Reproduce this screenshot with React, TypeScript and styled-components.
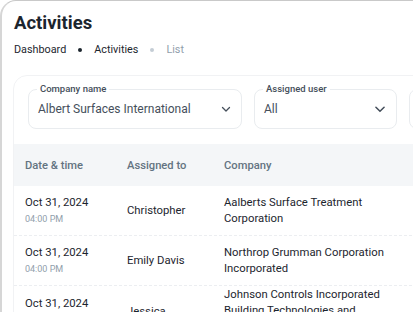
import React from "react";
import styled, { createGlobalStyle } from "styled-components";

const Global = createGlobalStyle`
  html, body { margin: 0; padding: 0; background: #fff; overflow: hidden; }
  body { font-family: Roboto, "Noto Sans", sans-serif; -webkit-font-smoothing: antialiased; }
  * { box-sizing: border-box; }
`;

const Frame = styled.div`
  width: 413px;
  height: 312px;
  overflow: hidden;
  border-left: 2px solid #d6d6d6;
  border-top: 1px solid #c9c9c9;
  border-top-left-radius: 16px;
  padding: 10px 0 0 11px;
  background: #fff;
`;

const Title = styled.h1`
  margin: 0;
  font-size: 18.5px;
  font-weight: 700;
  color: #1c252e;
  line-height: 24px;
  padding-left: 1px;
`;

const Crumbs = styled.nav`
  display: flex;
  align-items: center;
  gap: 12px;
  margin-top: 7px;
  padding-left: 1px;
  font-size: 10.8px;
  line-height: 16px;
`;

const Crumb = styled.span<{ $muted?: boolean }>`
  color: ${(p) => (p.$muted ? "#919eab" : "#1c252e")};
`;

const Dot = styled.span<{ $muted?: boolean }>`
  width: 4px;
  height: 4px;
  border-radius: 50%;
  background: ${(p) => (p.$muted ? "#c4cdd5" : "#1c252e")};
`;

const Card = styled.div`
  margin-top: 17px;
  border: 1px solid #f1f2f4;
  border-radius: 14px;
  width: 460px;
`;

const Filters = styled.div`
  display: flex;
  gap: 12px;
  padding: 13px 14px 15px 14px;
`;

const Select = styled.div<{ $w: number }>`
  position: relative;
  width: ${(p) => p.$w}px;
  height: 40px;
  flex-shrink: 0;
  border: 1px solid #e9ecef;
  border-radius: 8px;
  display: flex;
  align-items: center;
  justify-content: space-between;
  padding: 0 9px 0 9px;
`;

const Label = styled.span`
  position: absolute;
  top: -7px;
  left: 8px;
  padding: 0 3px;
  background: #fff;
  font-size: 9.5px;
  font-weight: 500;
  line-height: 12px;
  color: #454f5b;
`;

const Value = styled.span`
  font-size: 12px;
  color: #454f5b;
`;

const Chevron = ({ size }: { size: number }) => (
  <svg width={size} height={size} viewBox="0 0 24 24" fill="none">
    <path d="M5 9l7 7 7-7" stroke="#454f5b" strokeWidth="2.6" strokeLinecap="round" strokeLinejoin="round" />
  </svg>
);

const Table = styled.div`
  display: flex;
  flex-direction: column;
`;

const HeadRow = styled.div`
  display: grid;
  grid-template-columns: 102px 97px 1fr;
  align-items: center;
  height: 42px;
  padding-left: 11px;
  background: #f4f6f8;
  font-size: 11.2px;
  font-weight: 500;
  color: #637381;
`;

const Row = styled.div`
  display: grid;
  grid-template-columns: 102px 97px 1fr;
  align-items: center;
  min-height: 50px;
  padding: 1px 0 1px 11px;
  border-bottom: 1px dashed #eceef1;
  font-size: 11.3px;
  color: #1c252e;
`;

const DateCell = styled.div`
  display: flex;
  flex-direction: column;
  gap: 1px;
`;

const DateMain = styled.span`
  line-height: 16px;
`;

const Time = styled.span`
  font-size: 9px;
  line-height: 14px;
  color: #919eab;
`;

const Company = styled.div`
  line-height: 16px;
  max-width: 172px;
`;

const rows = [
  { user: "Christopher", company: "Aalberts Surface Treatment Corporation" },
  { user: "Emily Davis", company: "Northrop Grumman Corporation Incorporated" },
  { user: "Jessica", company: "Johnson Controls Incorporated Building Technologies and Solutions" },
];

export default function App() {
  return (
    <>
      <Global />
      <Frame>
        <Title>Activities</Title>
        <Crumbs>
          <Crumb>Dashboard</Crumb>
          <Dot />
          <Crumb>Activities</Crumb>
          <Dot $muted />
          <Crumb $muted>List</Crumb>
        </Crumbs>
        <Card>
          <Filters>
            <Select $w={214}>
              <Label>Company name</Label>
              <Value>Albert Surfaces International</Value>
              <Chevron size={12} />
            </Select>
            <Select $w={143}>
              <Label>Assigned user</Label>
              <Value>All</Value>
              <Chevron size={14} />
            </Select>
            <Select $w={143}>
              <Label>Status</Label>
              <Value>All</Value>
              <Chevron size={14} />
            </Select>
          </Filters>
          <Table>
            <HeadRow>
              <span>Date &amp; time</span>
              <span>Assigned to</span>
              <span>Company</span>
            </HeadRow>
            {rows.map((r) => (
              <Row key={r.user}>
                <DateCell>
                  <DateMain>Oct 31, 2024</DateMain>
                  <Time>04:00 PM</Time>
                </DateCell>
                <span>{r.user}</span>
                <Company>{r.company}</Company>
              </Row>
            ))}
          </Table>
        </Card>
      </Frame>
    </>
  );
}
